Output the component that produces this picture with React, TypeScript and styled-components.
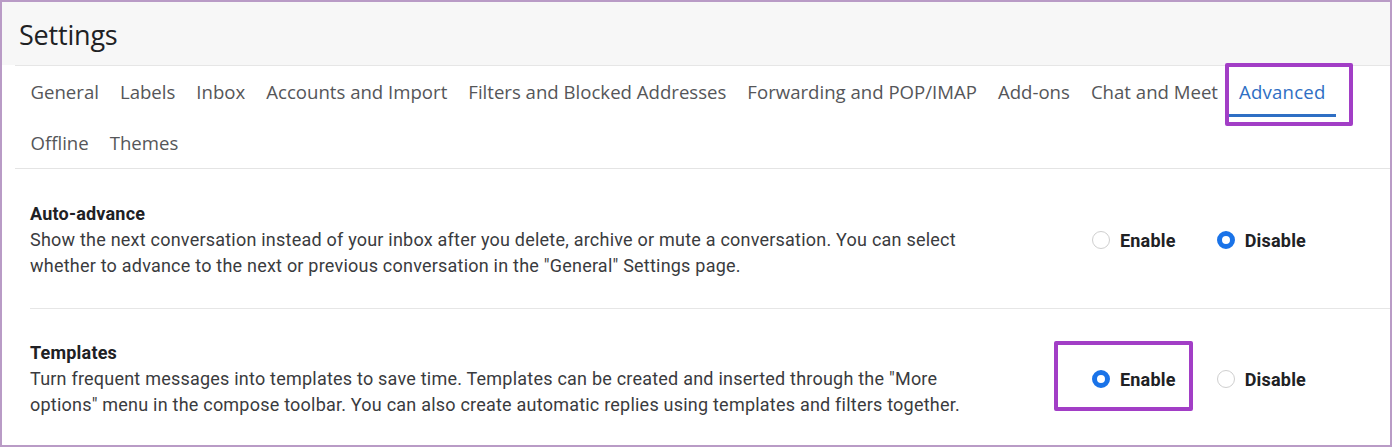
import * as React from 'react';
import styled, { createGlobalStyle } from 'styled-components';

const GlobalStyle = createGlobalStyle`
  html, body {
    margin: 0;
    padding: 0;
    background: #ffffff;
  }
  * {
    box-sizing: border-box;
  }
`

const Frame = styled.div`
  width: 1392px;
  height: 447px;
  border: 2px solid #b99bc6;
  overflow: hidden;
  display: flex;
  flex-direction: column;
  background: #ffffff;
  font-family: Roboto, "Liberation Sans", sans-serif;
`

const Header = styled.div`
  height: 63px;
  flex-shrink: 0;
  background: #f7f7f7;
  padding: 14px 0 0 17px;
  font-family: "Open Sans", Roboto, sans-serif;
  font-size: 27px;
  color: #202124;
  letter-spacing: -0.2px;
`

const Panel = styled.div`
  flex: 1;
  margin-left: 13px;
  border-top: 1px solid #e6e6e6;
  display: flex;
  flex-direction: column;
`

const TabBar = styled.div`
  display: flex;
  flex-wrap: wrap;
  padding: 0 30px 0 5px;
  border-bottom: 1px solid #e4e4e4;
`

const Tab = styled.div<{ $active?: boolean }>`
  position: relative;
  height: 51px;
  padding: 0 10.5px;
  display: flex;
  align-items: center;
  font-family: "Open Sans", Roboto, sans-serif;
  font-size: 18.6px;
  color: ${p => (p.$active ? '#2f6fc4' : '#555659')};
  letter-spacing: ${p => (p.$active ? '0.2px' : '0')};

  &::after {
    content: '';
    display: ${p => (p.$active ? 'block' : 'none')};
    position: absolute;
    left: 0;
    right: 0;
    bottom: 0;
    height: 3px;
    background: #2f6fc4;
  }
`

const Highlight = styled.div<{ $top: number; $left: number; $width: number; $height: number }>`
  position: absolute;
  top: ${p => p.$top}px;
  left: ${p => p.$left}px;
  width: ${p => p.$width}px;
  height: ${p => p.$height}px;
  border: 4px solid #a23ec6;
  border-radius: 2px;
  pointer-events: none;
`

const Section = styled.div<{ $last?: boolean }>`
  display: flex;
  align-items: flex-start;
  margin-left: 15px;
  padding: ${p => (p.$last ? '32px 0 0 0' : '33px 0 29px 0')};
  border-bottom: ${p => (p.$last ? 'none' : '1px solid #e6e6e6')};
`

const Info = styled.div`
  width: 968px;
  flex-shrink: 0;
`

const Title = styled.div`
  font-size: 18px;
  font-weight: bold;
  color: #202124;
  line-height: 24px;
  letter-spacing: 0.2px;
`

const Description = styled.div`
  font-size: 18px;
  color: #3a3b3e;
  line-height: 26px;
  margin-top: 1px;
  letter-spacing: 0.22px;
`

const Options = styled.div`
  display: flex;
  align-items: center;
  height: 26px;
  margin-left: 94px;
  margin-top: 25px;
  gap: 41px;
`

const Option = styled.label`
  display: flex;
  align-items: center;
  gap: 10px;
  font-size: 18px;
  font-weight: bold;
  color: #202124;
  letter-spacing: 0.2px;
`

const RadioDot = styled.span<{ $checked?: boolean }>`
  width: 18px;
  height: 18px;
  border-radius: 50%;
  border: ${p => (p.$checked ? '5px solid #1a73e8' : '1px solid #cfcfcf')};
  background: #ffffff;
`

const tabs = [
  'General', 'Labels', 'Inbox', 'Accounts and Import', 'Filters and Blocked Addresses',
  'Forwarding and POP/IMAP', 'Add-ons', 'Chat and Meet', 'Advanced', 'Offline', 'Themes',
]

const Radio = ({ label, checked }: { label: string; checked?: boolean }) => (
  <Option>
    <RadioDot $checked={checked} />
    {label}
  </Option>
)

const App: React.FC = () => {
  return (
    <>
      <GlobalStyle />
      <Frame>
        <Header>Settings</Header>
        <Panel>
          <TabBar>
            {tabs.map(t => (
              <Tab key={t} $active={t === 'Advanced'}>{t}</Tab>
            ))}
          </TabBar>

          <Section>
            <Info>
              <Title>Auto-advance</Title>
              <Description>
                Show the next conversation instead of your inbox after you delete, archive or mute a conversation. You can select whether to advance to the next or previous conversation in the "General" Settings page.
              </Description>
            </Info>
            <Options>
              <Radio label="Enable" />
              <Radio label="Disable" checked />
            </Options>
          </Section>

          <Section $last>
            <Info>
              <Title>Templates</Title>
              <Description>
                Turn frequent messages into templates to save time. Templates can be created and inserted through the "More options" menu in the compose toolbar. You can also create automatic replies using templates and filters together.
              </Description>
            </Info>
            <Options>
              <Radio label="Enable" checked />
              <Radio label="Disable" />
            </Options>
          </Section>
        </Panel>
      </Frame>
      <Highlight $top={63} $left={1225} $width={128} $height={63} />
      <Highlight $top={341} $left={1054} $width={139} $height={70} />
    </>
  );
};

export default App;
